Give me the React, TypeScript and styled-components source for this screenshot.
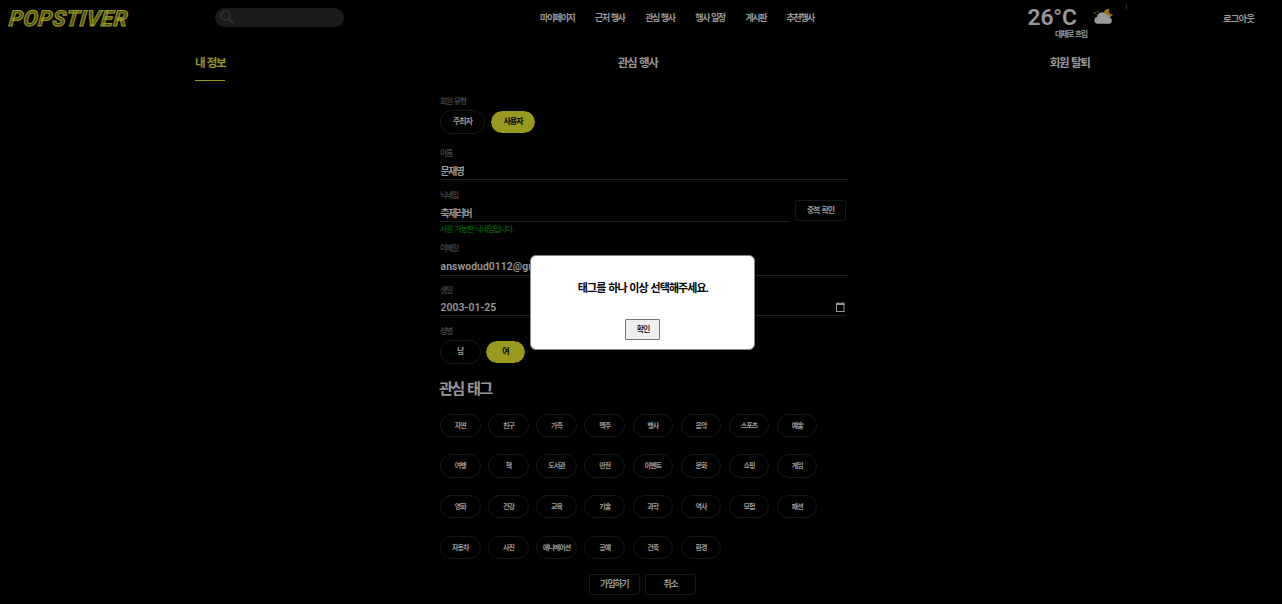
import React from "react";
import styled, { createGlobalStyle } from "styled-components";

const YELLOW = "#99991f";
const TEXT = "#999999";
const LINE = "#1f1f1f";

const Global = createGlobalStyle`
  * { box-sizing: border-box; }
  body {
    margin: 0;
    background: #000;
    color: ${TEXT};
    font-family: Roboto, "Noto Sans CJK KR", sans-serif;
    word-spacing: 1px;
    overflow: hidden;
  }
  button { font-family: inherit; word-spacing: inherit; }
`;

const Page = styled.div`
  width: 1282px;
  height: 604px;
  background: #000;
  display: flex;
  flex-direction: column;
`;

const Header = styled.header`
  height: 40px;
  flex: none;
  display: flex;
  align-items: flex-start;
`;

const Logo = styled.div`
  margin: 6px 0 0 8px;
  width: 207px;
  height: 24px;
  svg { display: block; overflow: visible; }
`;

const Search = styled.label`
  margin-top: 8px;
  width: 129px;
  height: 19px;
  border-radius: 10px;
  background: #1b1b1b;
  padding: 2px 5px;
  svg { display: block; }
`;

const Nav = styled.nav`
  margin: 8px 0 0 196px;
  width: 487.5px;
  display: flex;
  gap: 20.6px;
`;

const Link = styled.a<{ $w: number; $size?: number }>`
  width: ${(p) => p.$w}px;
  line-height: 21px;
  font-size: ${(p) => p.$size ?? 9}px;
  font-weight: 700;
  letter-spacing: -1.4px;
  white-space: nowrap;
`;

const Logout = styled(Link)`
  margin: 8px 0 0 -0.5px;
  letter-spacing: -0.9px;
`;

const Weather = styled.div`
  width: 196px;
  height: 40px;
`;

const WeatherTop = styled.div`
  display: flex;
  height: 29px;
  svg { flex: none; margin: 8px 0 0; }
`;

const Temp = styled.div`
  width: 64px;
  font-size: 22.8px;
  line-height: 35px;
  font-weight: 600;
  letter-spacing: -0.1px;
  white-space: nowrap;
`;

const Tick = styled.span`
  margin: 3px 0 0 10px;
  font-size: 7px;
  line-height: 8px;
  font-style: italic;
  color: #555;
`;

const Sky = styled.div`
  margin-left: 27.5px;
  font-size: 8px;
  line-height: 11px;
  font-weight: 700;
  letter-spacing: -1.35px;
`;

const Tabs = styled.div`
  height: 55px;
  flex: none;
  padding: 12px 192.5px 0 195px;
  display: flex;
  align-items: flex-start;
  justify-content: space-between;
`;

const Tab = styled.div<{ $on?: boolean }>`
  height: 29px;
  line-height: 23px;
  font-size: 11.5px;
  font-weight: 700;
  letter-spacing: -1.3px;
  white-space: nowrap;
  color: ${(p) => (p.$on ? YELLOW : TEXT)};
  border-bottom: 1px solid ${(p) => (p.$on ? YELLOW : "transparent")};
`;

const Form = styled.form`
  width: 408px;
  margin-left: 440px;
  display: flex;
  flex-direction: column;
`;

const Field = styled.div<{ $h: number }>`
  height: ${(p) => p.$h}px;
`;

const Label = styled.div`
  height: 12px;
  line-height: 14px;
  font-size: 7.8px;
  font-weight: 500;
  letter-spacing: -1.15px;
  color: #4a5056;
`;

const Row = styled.div<{ $gap: number; $top?: number }>`
  display: flex;
  gap: ${(p) => p.$gap}px;
  padding-top: ${(p) => p.$top ?? 0}px;
`;

const Value = styled.div<{ $h: number; $w?: number; $latin?: boolean }>`
  width: ${(p) => p.$w ?? 408}px;
  height: ${(p) => p.$h}px;
  flex: none;
  padding-left: 0.5px;
  display: flex;
  justify-content: space-between;
  border-bottom: 1px solid ${LINE};
  line-height: ${(p) => p.$h + 4}px;
  font-size: ${(p) => (p.$latin ? 10.4 : 9.8)}px;
  font-weight: ${(p) => (p.$latin ? 600 : 700)};
  letter-spacing: ${(p) => (p.$latin ? 0.07 : -1.35)}px;
  white-space: nowrap;
`;

const Message = styled.div`
  line-height: 15px;
  font-size: 8px;
  font-weight: 500;
  letter-spacing: -1.15px;
  color: #005f00;
`;

const Pill = styled.button<{ $on?: boolean; $w: number; $size?: number }>`
  width: ${(p) => p.$w}px;
  height: 23.5px;
  flex: none;
  padding: 1px 0 0;
  border-radius: 12px;
  border: 1px solid ${(p) => (p.$on ? "#000" : "#181818")};
  background: ${(p) => (p.$on ? YELLOW : "#000")};
  background-clip: padding-box;
  color: ${(p) => (p.$on ? "#000" : TEXT)};
  font-size: ${(p) => p.$size ?? 8}px;
  line-height: 20px;
  font-weight: 700;
  letter-spacing: -0.95px;
  white-space: nowrap;
`;

const BoxButton = styled.button<{ $size: number }>`
  width: 51px;
  height: 21px;
  padding: 0;
  border-radius: 3px;
  border: 1px solid #181818;
  background: #000;
  color: ${TEXT};
  font-size: ${(p) => p.$size}px;
  line-height: 19px;
  font-weight: 700;
  letter-spacing: -1px;
`;

const CheckButton = styled(BoxButton)`
  margin-top: -1px;
  letter-spacing: -1.1px;
`;

const Heading = styled.h2`
  margin: 0 0 0 -1px;
  height: 39px;
  line-height: 28px;
  font-size: 15.2px;
  font-weight: 700;
  letter-spacing: -1.6px;
`;

const Tags = styled.div`
  display: grid;
  grid-template-columns: repeat(8, 40.5px);
  column-gap: 7.65px;
  grid-auto-rows: 23.5px;
  row-gap: 17.2px;
`;

const Actions = styled.div`
  display: flex;
  gap: 5px;
  padding: 15px 0 0 149px;
`;

const Overlay = styled.div`
  position: fixed;
  inset: 0;
  display: flex;
  align-items: flex-start;
  padding: 255px 0 0 530.4px;
`;

const Dialog = styled.div`
  width: 225px;
  height: 95px;
  border-radius: 6px;
  border: 1px solid #888;
  background: #fff;
  color: #000;
  display: flex;
  flex-direction: column;
  align-items: center;
`;

const DialogText = styled.p`
  margin: 22px 0 0;
  height: 41px;
  line-height: 21px;
  font-size: 11px;
  font-weight: 700;
  letter-spacing: -0.93px;
  white-space: nowrap;
`;

const Confirm = styled.button`
  width: 35px;
  height: 21px;
  padding: 0;
  border: 1px solid #767676;
  border-radius: 1px;
  background: #efefef;
  color: #000;
  font-size: 8px;
  line-height: 19px;
  font-weight: 500;
  letter-spacing: -1.1px;
`;

const links: [string, number][] = [
  ["마이페이지", 34.5],
  ["근처 행사", 29.5],
  ["관심 행사", 29.5],
  ["행사 일정", 29.5],
  ["게시판", 20.5],
  ["추천행사", 29],
];

const tags = [
  "자연", "친구", "가족", "맥주", "행사", "음악", "스포츠", "예술",
  "여행", "책", "도서관", "안전", "이벤트", "문화", "쇼핑", "게임",
  "영화", "건강", "교육", "기술", "과학", "역사", "모험", "패션",
  "자동차", "사진", "애니메이션", "공예", "건축", "환경",
];

const CloudMoon = () => (
  <svg width="24" height="18" viewBox="0 0 24 18">
    <path d="M16.500 0.800 C12.500 1.200 11 4.500 12.500 7.500 C14 10.500 19.500 10 21 6.300 C17.800 6.800 16 4 17.500 0.800Z" fill="#9b740a" />
    <circle cx="5.700" cy="3.600" r="0.8" fill="#806010" />
    <circle cx="2.800" cy="5" r="0.9" fill="#806010" />
    <circle cx="4.600" cy="6.600" r="0.5" fill="#806010" />
    <path d="M5.500 15.800 A3.500 3.500 0 0 1 5 8.900 A5.200 5.200 0 0 1 14.500 6.700 A3.500 3.500 0 0 1 18 9.700 A3.200 3.200 0 0 1 17 15.800Z" fill="#999" />
  </svg>
);

export default function App() {
  return (
    <>
      <Global />
      <Page>
        <Header>
          <Logo>
            <svg width="121" height="24" viewBox="0 0 121 24">
              <text
                transform="translate(0.500 19.500) skewX(-6)"
                textLength="118"
                lengthAdjust="spacing"
                fontFamily="Roboto"
                fontWeight="700"
                fontStyle="italic"
                fontSize="21.8"
                fill="#4a4a0e"
                stroke={YELLOW}
                strokeWidth="1.1"
              >
                POPSTIVER
              </text>
            </svg>
          </Logo>
          <Search>
            <svg width="14" height="14" viewBox="0 0 14 14" fill="none" stroke="#383838" strokeWidth="1.3">
              <circle cx="5.500" cy="5.500" r="4.300" />
              <path d="M8.700 8.700 L13 13" />
            </svg>
          </Search>
          <Nav>
            {links.map(([t, w]) => (
              <Link key={t} $w={w}>{t}</Link>
            ))}
          </Nav>
          <Weather>
            <WeatherTop>
              <Temp>26°C</Temp>
              <CloudMoon />
              <Tick>i</Tick>
            </WeatherTop>
            <Sky>대체로 흐림</Sky>
          </Weather>
          <Logout $w={32} $size={9.4}>로그아웃</Logout>
        </Header>
        <Tabs>
          <Tab $on>내 정보</Tab>
          <Tab>관심 행사</Tab>
          <Tab>회원 탈퇴</Tab>
        </Tabs>
        <Form>
          <Field $h={52}>
            <Label>회원 유형</Label>
            <Row $gap={5} $top={3}>
              <Pill type="button" $w={45}>주최자</Pill>
              <Pill type="button" $w={46} $on>사용자</Pill>
            </Row>
          </Field>
          <Field $h={42}>
            <Label>이름</Label>
            <Value $h={21}>문재영</Value>
          </Field>
          <Field $h={53}>
            <Label>닉네임</Label>
            <Row $gap={5}>
              <Value $h={21} $w={350}>축제러버</Value>
              <CheckButton type="button" $size={8}>중복 확인</CheckButton>
            </Row>
            <Message>사용 가능한 닉네임입니다.</Message>
          </Field>
          <Field $h={42}>
            <Label>이메일</Label>
            <Value $h={22} $latin>answodud0112@gmail.com</Value>
          </Field>
          <Field $h={41}>
            <Label>생일</Label>
            <Value $h={20} $w={406} $latin>
              2003-01-25
              <svg width="11" height="18" viewBox="0 0 11 18" fill="none" stroke={TEXT}>
                <path d="M1.500 8.500H9.500M3 6V8M8 6V8" />
                <rect x="1.500" y="7.500" width="7.500" height="8" />
              </svg>
            </Value>
          </Field>
          <Field $h={49.5}>
            <Label>성별</Label>
            <Row $gap={4.2} $top={3}>
              <Pill type="button" $w={40.5}>남</Pill>
              <Pill type="button" $w={41.5} $on>여</Pill>
            </Row>
          </Field>
          <Heading>관심 태그</Heading>
          <Tags>
            {tags.map((t) => (
              <Pill type="button" key={t} $w={40.5} $size={7}>{t}</Pill>
            ))}
          </Tags>
          <Actions>
            <BoxButton type="button" $size={8.8}>가입하기</BoxButton>
            <BoxButton type="button" $size={8.8}>취소</BoxButton>
          </Actions>
        </Form>
      </Page>
      <Overlay>
        <Dialog role="dialog">
          <DialogText>태그를 하나 이상 선택해주세요.</DialogText>
          <Confirm>확인</Confirm>
        </Dialog>
      </Overlay>
    </>
  );
}
